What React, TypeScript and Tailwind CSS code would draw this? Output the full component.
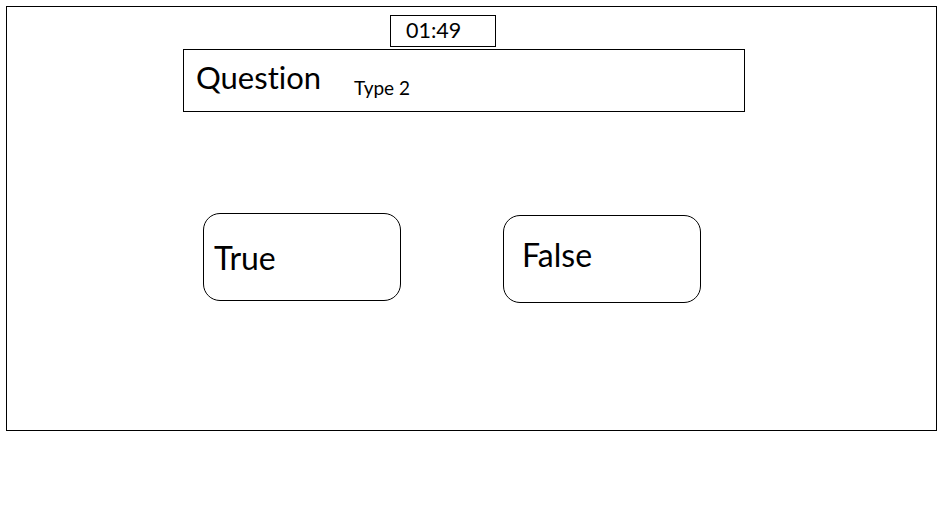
export default function App() {
  return (
    <div className="pt-[6px] pl-[6px] bg-white min-h-[524px] [font-variant-ligatures:none]" style={{ fontFamily: "Lato, 'Open Sans', sans-serif" }}>
      <div className="w-[931px] h-[425px] border border-black flex flex-col items-start text-black">
        <div className="ml-[383px] mt-[8px] w-[106px] h-[32px] border border-black pl-[15px] pt-[4px]">
          <span className="block text-[21.5px] leading-none">01:49</span>
        </div>
        <div className="ml-[176px] mt-[2px] w-[562px] h-[63px] border border-black flex items-start pl-[12px]">
          <span className="mt-[12px] text-[31px] leading-none">Question</span>
          <span className="ml-[33px] mt-[28px] text-[19px] leading-none">Type 2</span>
        </div>
        <div className="ml-[196px] mt-[101px] flex items-start">
          <button className="w-[198px] h-[88px] border border-black rounded-[17px] flex items-start pl-[10px] pt-[28px] text-left">
            <span className="text-[32px] leading-none">True</span>
          </button>
          <button className="ml-[102px] mt-[2px] w-[198px] h-[88px] border border-black rounded-[17px] flex items-start pl-[18px] pt-[23px] text-left">
            <span className="text-[32px] leading-none">False</span>
          </button>
        </div>
      </div>
    </div>
  );
}
